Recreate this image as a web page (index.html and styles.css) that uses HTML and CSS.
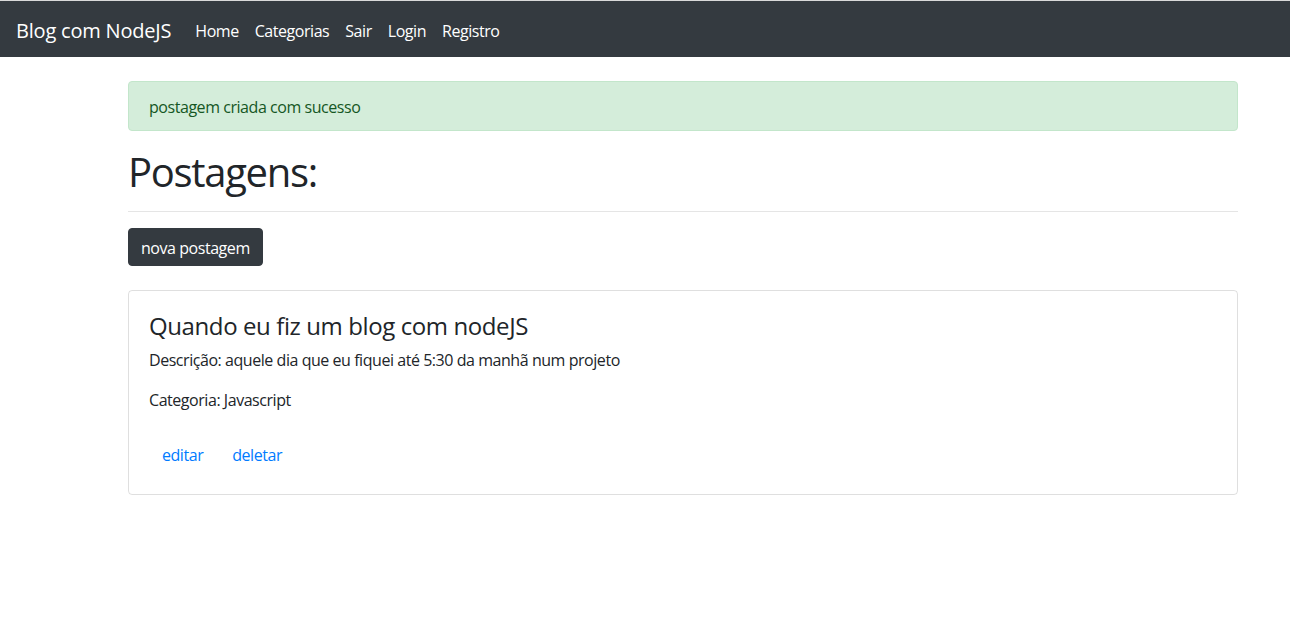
FILE: index.html
```html
<!DOCTYPE html>
<html lang="pt-BR">
<head>
<meta charset="utf-8">
<title>Blog com NodeJS</title>
<link rel="stylesheet" href="styles.css">
</head>
<body>
<div class="topline"></div>
<nav class="navbar">
  <a class="brand" href="#">Blog com NodeJS</a>
  <ul class="nav">
    <li><a class="nav-link" href="#">Home</a></li>
    <li><a class="nav-link" href="#">Categorias</a></li>
    <li><a class="nav-link" href="#">Sair</a></li>
    <li><a class="nav-link" href="#">Login</a></li>
    <li><a class="nav-link" href="#">Registro</a></li>
  </ul>
</nav>
<main class="container">
  <div class="alert">postagem criada com sucesso</div>
  <h1 class="page-title">Postagens:</h1>
  <hr class="divider">
  <a class="btn btn-dark" href="#">nova postagem</a>
  <div class="card">
    <div class="card-body">
      <h4 class="card-title">Quando eu fiz um blog com nodeJS</h4>
      <p class="card-text">Descrição: aquele dia que eu fiquei até 5:30 da manhã num projeto</p>
      <p class="card-text">Categoria: Javascript</p>
      <div class="actions">
        <a class="btn btn-link" href="#">editar</a>
        <a class="btn btn-link" href="#">deletar</a>
      </div>
    </div>
  </div>
</main>
</body>
</html>
```

FILE: styles.css
```css
* { box-sizing: border-box; }
html, body { margin: 0; padding: 0; }
body {
  font-family: "Open Sans", "Noto Sans", sans-serif;
  font-size: 16px;
  line-height: 1.5;
  color: #212529;
  background: #fff;
  width: 1290px;
  overflow: hidden;
}
.topline { height: 1px; background: #d9d9d9; }
.navbar {
  display: flex;
  align-items: center;
  height: 56px;
  padding: 10px 16px 6px;
  background: #343a40;
}
.brand {
  color: #fff;
  font-size: 20px;
  line-height: 30px;
  text-decoration: none;
  margin-right: 16px;
  letter-spacing: -0.2px;
}
.nav { display: flex; list-style: none; margin: 0; padding: 0; }
.nav-link {
  display: block;
  padding: 8px 8px;
  color: #fff;
  text-decoration: none;
  letter-spacing: -0.45px;
}
.container {
  width: 1140px;
  margin-left: 113px;
  padding: 24px 15px 0;
}
.alert {
  padding: 13px 20px 11px;
  margin-bottom: 16px;
  border: 1px solid #c3e6cb;
  border-radius: 4px;
  background: #d4edda;
  color: #155724;
  letter-spacing: -0.45px;
}
.page-title {
  margin: 0 0 8px;
  padding-top: 2px;
  font-size: 40px;
  font-weight: 400;
  line-height: 46px;
  letter-spacing: -1.3px;
}
.divider {
  margin: 16px 0;
  border: 0;
  border-top: 1px solid rgba(0,0,0,.1);
}
.btn {
  display: inline-block;
  padding: 7px 12px 5px;
  font-size: 16px;
  line-height: 24px;
  border: 1px solid transparent;
  border-radius: 4px;
  text-decoration: none;
  letter-spacing: -0.45px;
}
.btn-dark { background: #343a40; border-color: #343a40; color: #fff; }
.btn-link { color: #007bff; }
.card {
  margin-top: 24px;
  border: 1px solid rgba(0,0,0,.125);
  border-radius: 4px;
}
.card-body { padding: 20px; }
.card-title {
  margin: 0 0 8px;
  padding-top: 1px;
  font-size: 24px;
  font-weight: 400;
  line-height: 28px;
  letter-spacing: -0.4px;
}
.card-text { margin: 0 0 16px; letter-spacing: -0.45px; }
.actions { display: flex; gap: 3px; padding: 7px 0 1px; }
```
